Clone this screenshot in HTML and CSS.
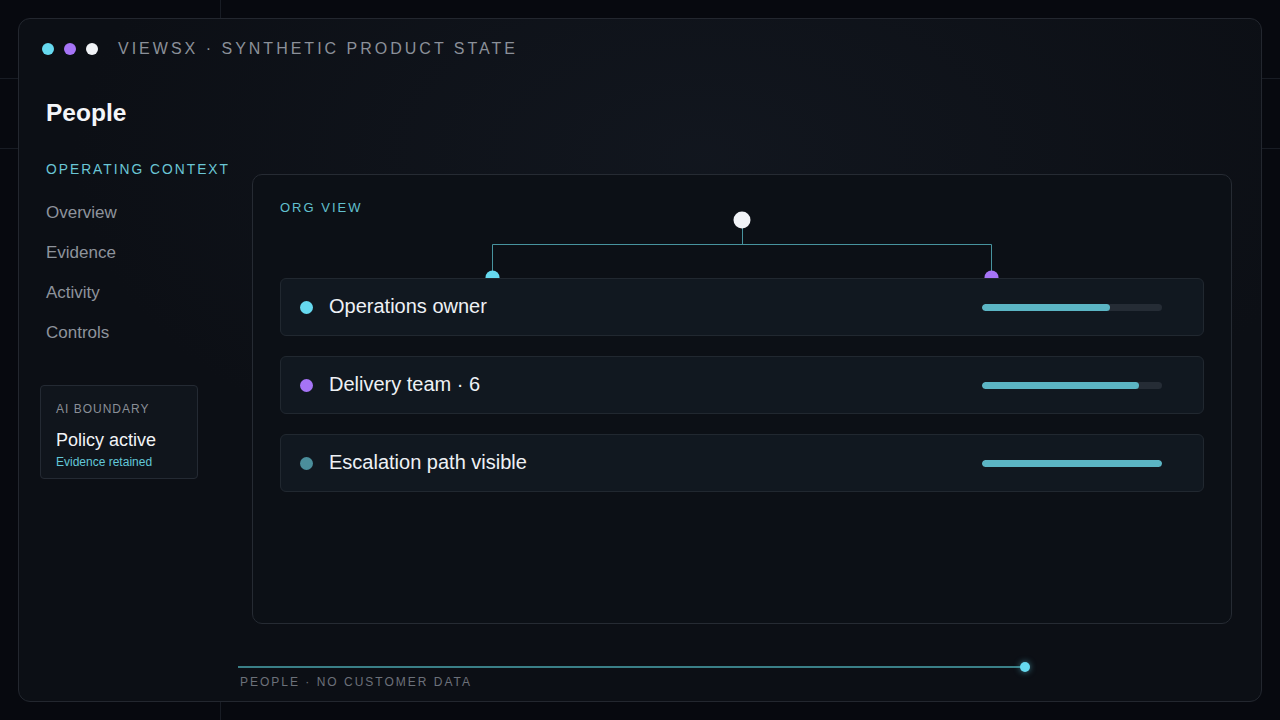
FILE: index.html
```html
<!DOCTYPE html>
<html lang="en">
<head>
<meta charset="utf-8">
<title>ViewsX · People</title>
<link rel="stylesheet" href="styles.css">
</head>
<body>
  <div class="window">
    <header class="topbar">
      <span class="dot dot-cyan"></span>
      <span class="dot dot-violet"></span>
      <span class="dot dot-white"></span>
      <span class="brand">VIEWSX · SYNTHETIC PRODUCT STATE</span>
    </header>

    <div class="body">
      <aside class="sidebar">
        <h1 class="title">People</h1>
        <div class="section-label">OPERATING CONTEXT</div>
        <nav class="nav">
          <a class="nav-item">Overview</a>
          <a class="nav-item">Evidence</a>
          <a class="nav-item">Activity</a>
          <a class="nav-item">Controls</a>
        </nav>
        <div class="boundary">
          <div class="boundary-label">AI BOUNDARY</div>
          <div class="boundary-title">Policy active</div>
          <div class="boundary-note">Evidence retained</div>
        </div>
      </aside>

      <main class="main">
        <section class="panel">
          <div class="panel-label">ORG VIEW</div>
          <svg class="tree" width="924" height="75" viewBox="0 0 924 75">
            <g stroke="#47939e" stroke-width="1" fill="none">
              <line x1="462.5" y1="18" x2="462.5" y2="34.5"/>
              <line x1="212.5" y1="34.5" x2="711.5" y2="34.5"/>
              <line x1="212.5" y1="34.5" x2="212.5" y2="66"/>
              <line x1="711.5" y1="34.5" x2="711.5" y2="66"/>
            </g>
            <circle cx="462" cy="10" r="8.5" fill="#f1f3f7"/>
            <circle cx="212.5" cy="67.5" r="7" fill="#66d9ef"/>
            <circle cx="711.5" cy="67.5" r="7" fill="#a674f6"/>
          </svg>
          <div class="rows">
            <div class="row">
              <span class="row-dot dot-cyan"></span>
              <span class="row-text">Operations owner</span>
              <div class="bar"><div class="bar-fill" style="width:71%"></div></div>
            </div>
            <div class="row">
              <span class="row-dot dot-violet"></span>
              <span class="row-text">Delivery team · 6</span>
              <div class="bar"><div class="bar-fill" style="width:87%"></div></div>
            </div>
            <div class="row">
              <span class="row-dot dot-teal"></span>
              <span class="row-text">Escalation path visible</span>
              <div class="bar"><div class="bar-fill" style="width:100%"></div></div>
            </div>
          </div>
        </section>

        <footer class="footer">
          <div class="track"><span class="track-end"></span></div>
          <div class="footer-text">PEOPLE · NO CUSTOMER DATA</div>
        </footer>
      </main>
    </div>
  </div>
</body>
</html>
```

FILE: styles.css
```css
* {
  box-sizing: border-box;
}

html,
body {
  margin: 0;
  height: 100%;
}

body {
  width: 1280px;
  height: 720px;
  padding: 18px;
  font-family: "Liberation Sans", Arial, sans-serif;
  color: #eef1f5;
  background-color: #07090f;
  background-image:
    linear-gradient(#181c24, #181c24),
    linear-gradient(#181c24, #181c24),
    linear-gradient(#181c24, #181c24);
  background-size: 1px 100%, 100% 1px, 100% 1px;
  background-position: 220px 0, 0 78px, 0 148px;
  background-repeat: no-repeat;
  overflow: hidden;
}

/* Application window */
.window {
  width: 1244px;
  height: 684px;
  border: 1px solid #23272f;
  border-radius: 12px;
  background:
    radial-gradient(ellipse 900px 500px at 55% 20%, rgba(22, 28, 38, 0.55), rgba(12, 15, 21, 0) 70%),
    #0c0f15;
  padding: 0 29px 0 27px;
  display: flex;
  flex-direction: column;
}

.topbar {
  height: 59px;
  display: flex;
  align-items: center;
  margin-left: -4px;
}

.dot {
  width: 12px;
  height: 12px;
  border-radius: 50%;
  margin-right: 10px;
  flex: none;
}

.dot-cyan { background: #66d9ef; }
.dot-violet { background: #a674f6; }
.dot-white { background: #f1f3f7; }
.dot-teal { background: #4b8e9b; }

.brand {
  margin-left: 10px;
  font-size: 16px;
  letter-spacing: 3px;
  color: #8b9099;
}

.body {
  flex: 1;
  display: flex;
}

/* Sidebar */
.sidebar {
  width: 206px;
  flex: none;
}

.title {
  margin: 21px 0 0;
  font-size: 24.5px;
  line-height: 28px;
  font-weight: 700;
  color: #f4f6f9;
}

.section-label {
  margin-top: 35px;
  font-size: 13.8px;
  line-height: 16px;
  letter-spacing: 2px;
  color: #6ac6d5;
}

.nav {
  margin-top: 15px;
  display: flex;
  flex-direction: column;
}

.nav-item {
  font-size: 17px;
  line-height: 40px;
  color: #8e939c;
}

.boundary {
  margin: 32px 0 0 -6px;
  width: 158px;
  height: 94px;
  border: 1px solid #242a33;
  border-radius: 4px;
  background: #10151c;
  padding: 16px 0 0 15px;
}

.boundary-label {
  font-size: 12px;
  line-height: 14px;
  letter-spacing: 1px;
  color: #8a8f98;
}

.boundary-title {
  margin-top: 13px;
  font-size: 18px;
  line-height: 22px;
  color: #f1f3f6;
}

.boundary-note {
  margin-top: 4px;
  font-size: 12px;
  line-height: 14px;
  color: #62c7d8;
}

/* Main column */
.main {
  flex: 1;
  display: flex;
  flex-direction: column;
}

.panel {
  margin-top: 96px;
  height: 450px;
  border: 1px solid #262b33;
  border-radius: 10px;
  background: #0c1016;
  padding: 26px 27px 0;
}

.panel-label {
  font-size: 13px;
  line-height: 14px;
  letter-spacing: 2px;
  color: #62c0cf;
}

.tree {
  display: block;
  margin-top: -5px;
}

.rows {
  position: relative;
  z-index: 1;
  margin-top: -7px;
  display: flex;
  flex-direction: column;
  gap: 20px;
}

.row {
  height: 58px;
  border: 1px solid #212830;
  border-radius: 6px;
  background: #111820;
  display: flex;
  align-items: center;
  padding: 0 41px 0 19px;
}

.row-dot {
  width: 13px;
  height: 13px;
  border-radius: 50%;
  flex: none;
}

.row-text {
  margin-left: 16px;
  font-size: 20px;
  line-height: 22px;
  padding-bottom: 2px;
  color: #eef1f5;
}

.bar {
  margin-left: auto;
  width: 180px;
  height: 7px;
  border-radius: 4px;
  background: #252c35;
  overflow: hidden;
}

.bar-fill {
  height: 100%;
  border-radius: 4px;
  background: #5bb5c4;
}

/* Footer rail */
.footer {
  margin: 42px 0 0 -14px;
}

.track {
  position: relative;
  width: 787px;
  height: 2px;
  background: #3a7f87;
}

.track-end {
  position: absolute;
  right: -5px;
  top: -4px;
  width: 10px;
  height: 10px;
  border-radius: 50%;
  background: #66d9ef;
  box-shadow: 0 0 6px rgba(102, 217, 239, 0.55);
}

.footer-text {
  margin: 7px 0 0 2px;
  font-size: 12px;
  line-height: 14px;
  letter-spacing: 2px;
  color: #6c717a;
}
```
